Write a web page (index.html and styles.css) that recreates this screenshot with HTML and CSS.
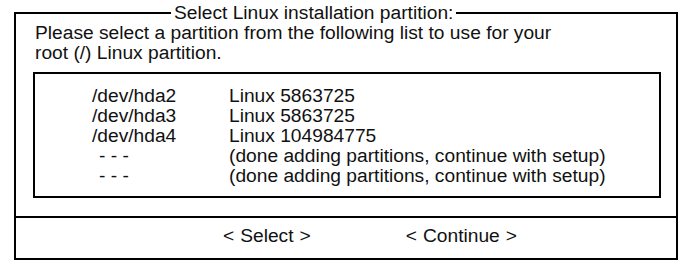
FILE: index.html
```html
<!DOCTYPE html>
<html lang="en">
<head>
  <meta charset="UTF-8">
  <title>Select Linux installation partition</title>
  <link rel="stylesheet" href="styles.css">
</head>
<body>
  <div class="window">
    <div class="window-title">Select Linux installation partition:</div>
    <div class="window-body">
      <p class="prompt">Please select a partition from the following list to use for your<br>root (/) Linux partition.</p>
      <ul class="partition-list">
        <li><span class="dev">/dev/hda2</span><span>Linux 5863725</span></li>
        <li><span class="dev">/dev/hda3</span><span>Linux 5863725</span></li>
        <li><span class="dev">/dev/hda4</span><span>Linux 104984775</span></li>
        <li><span class="dev dashes">- - -</span><span>(done adding partitions, continue with setup)</span></li>
        <li><span class="dev dashes">- - -</span><span>(done adding partitions, continue with setup)</span></li>
      </ul>
    </div>
    <div class="buttons">
      <span class="btn"><span>&lt;</span><span>Select</span><span>&gt;</span></span>
      <span class="btn"><span>&lt;</span><span>Continue</span><span>&gt;</span></span>
    </div>
  </div>
</body>
</html>
```

FILE: styles.css
```css
body {
  margin: 0;
  background: #fff;
  color: #111;
  font-family: 'Liberation Sans', Arial, sans-serif;
  font-size: 19.2px;
  line-height: 20px;
}

.window {
  position: relative;
  width: 660px;
  margin: 12px 0 0 14px;
  border: 2px solid #000;
}

.window-title {
  position: absolute;
  top: -11px;
  left: 155px;
  padding: 0 3px;
  background: #fff;
}

.window-body {
  padding: 9px 15px 18px 17px;
}

.prompt {
  margin: 0 0 9px 2px;
}

.partition-list {
  list-style: none;
  margin: 0;
  padding: 12px 0 10px 57px;
  border: 2px solid #000;
}

.partition-list li {
  display: flex;
}

.dev {
  width: 137px;
}

.dashes {
  width: 130px;
  padding-left: 7px;
}

.buttons {
  display: flex;
  padding: 8px 0 12px 207px;
  gap: 95px;
  border-top: 2px solid #000;
}

.btn {
  display: flex;
  gap: 6px;
}
```
